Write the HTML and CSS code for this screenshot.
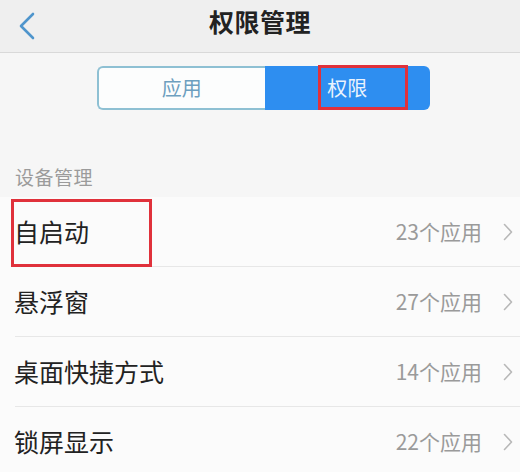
FILE: index.html
```html
<!DOCTYPE html>
<html lang="zh-CN">
<head>
<meta charset="utf-8">
<link rel="stylesheet" href="styles.css">
</head>
<body>
<div class="screen">
  <header class="header">
    <span class="back">
      <svg width="18" height="28" viewBox="0 0 18 28"><path d="M15 2 L3 14 L15 26" fill="none" stroke="#4f95cc" stroke-width="2.6" stroke-linecap="round" stroke-linejoin="round"/></svg>
    </span>
    <h1 class="title">权限管理</h1>
    <span></span>
  </header>

  <div class="seg-wrap">
    <div class="seg">
      <div class="seg-item seg-left">应用</div>
      <div class="seg-item seg-right">权限<span class="mark mark-tab"></span></div>
    </div>
  </div>

  <div class="section-title">设备管理</div>

  <ul class="list">
    <li class="row">
      <div class="row-inner">
        <span class="label">自启动</span>
        <span class="count">23个应用</span>
        <svg class="chev" width="10" height="18" viewBox="0 0 10 18"><path d="M1.5 1.5 L8.5 9 L1.5 16.5" fill="none" stroke="#b8b8b8" stroke-width="1.6" stroke-linecap="round" stroke-linejoin="round"/></svg>
      </div>
      <span class="mark mark-row"></span>
    </li>
    <li class="row">
      <div class="row-inner">
        <span class="label">悬浮窗</span>
        <span class="count">27个应用</span>
        <svg class="chev" width="10" height="18" viewBox="0 0 10 18"><path d="M1.5 1.5 L8.5 9 L1.5 16.5" fill="none" stroke="#b8b8b8" stroke-width="1.6" stroke-linecap="round" stroke-linejoin="round"/></svg>
      </div>
    </li>
    <li class="row">
      <div class="row-inner">
        <span class="label">桌面快捷方式</span>
        <span class="count">14个应用</span>
        <svg class="chev" width="10" height="18" viewBox="0 0 10 18"><path d="M1.5 1.5 L8.5 9 L1.5 16.5" fill="none" stroke="#b8b8b8" stroke-width="1.6" stroke-linecap="round" stroke-linejoin="round"/></svg>
      </div>
    </li>
    <li class="row">
      <div class="row-inner">
        <span class="label">锁屏显示</span>
        <span class="count">22个应用</span>
        <svg class="chev" width="10" height="18" viewBox="0 0 10 18"><path d="M1.5 1.5 L8.5 9 L1.5 16.5" fill="none" stroke="#b8b8b8" stroke-width="1.6" stroke-linecap="round" stroke-linejoin="round"/></svg>
      </div>
    </li>
  </ul>
</div>
</body>
</html>
```

FILE: styles.css
```css
* { box-sizing: border-box; }
html, body {
  margin: 0;
  padding: 0;
  background: #f6f6f6;
  font-family: "Noto Sans CJK SC", "Noto Sans", sans-serif;
}
.screen {
  width: 520px;
  height: 472px;
  overflow: hidden;
  background: #f6f6f6;
}
.header {
  height: 53px;
  background: #efefef;
  border-bottom: 1px solid #d9d9d9;
  display: grid;
  grid-template-columns: 1fr auto 1fr;
  align-items: center;
  padding-bottom: 9px;
}
.back {
  display: flex;
  padding-left: 18px;
  padding-top: 8px;
}
.title {
  margin: 0;
  font-size: 25px;
  font-weight: 700;
  color: #222;
  line-height: 1;
  letter-spacing: 0.5px;
}
.seg-wrap {
  padding: 13px 0 0 97px;
}
.seg {
  display: flex;
  width: 333px;
  height: 44px;
}
.seg-item {
  flex: 1;
  display: flex;
  align-items: center;
  justify-content: center;
  font-size: 20px;
  line-height: 1;
}
.seg-left {
  background: #fcfdfd;
  border: 2px solid #8ec0d3;
  border-right: none;
  border-radius: 6px 0 0 6px;
  color: #6d9fbf;
}
.seg-right {
  position: relative;
  background: #2e8ef0;
  border-radius: 0 6px 6px 0;
  color: #eaf3fd;
}
.mark {
  position: absolute;
  border: 3px solid #e0313b;
}
.mark-tab {
  left: 53px;
  top: -1px;
  width: 90px;
  height: 45px;
}
.section-title {
  padding: 57px 0 0 15px;
  height: 87px;
  font-size: 19px;
  line-height: 1;
  color: #9b9b9b;
  letter-spacing: 0.5px;
}
.list {
  list-style: none;
  margin: 0;
  padding: 0;
  background: #fbfbfb;
}
.row {
  position: relative;
  padding-left: 15px;
}
.row-inner {
  height: 70px;
  display: flex;
  align-items: center;
  border-bottom: 1px solid #e7e7e7;
  padding-right: 7px;
}
.label {
  flex: 1;
  font-size: 25px;
  color: #222;
  line-height: 1;
  margin-left: -1px;
}
.count {
  font-size: 21px;
  color: #9a9a9a;
  line-height: 1;
  margin-right: 21px;
}
.chev { display: block; }
.mark-row {
  left: 11px;
  top: 2px;
  width: 141px;
  height: 68px;
}
```
